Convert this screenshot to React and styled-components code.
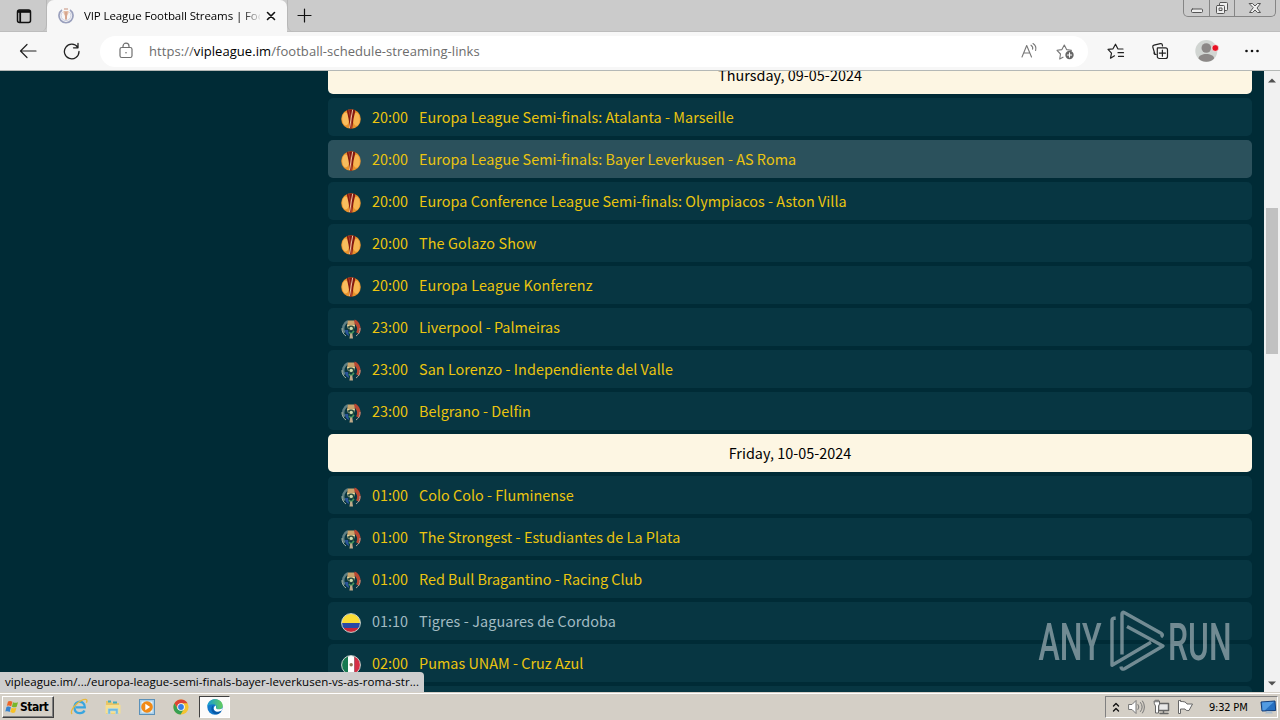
import React from 'react';
import styled, { createGlobalStyle } from 'styled-components';

const Global = createGlobalStyle`
  * { box-sizing: border-box; }
  body { margin: 0; overflow: hidden; background: #002b36; }
  svg { display: block; flex: none; }
`;

const uiFont = '"Open Sans", "Noto Sans", sans-serif';
const pageFont = '"Noto Sans CJK SC", "Open Sans", sans-serif';

const Screen = styled.div`
  width: 1280px;
  height: 720px;
  display: flex;
  flex-direction: column;
  position: relative;
  overflow: hidden;
  font-family: ${uiFont};
`;

/* ---------- window title and tabs ---------- */
const TitleBar = styled.header`
  flex: none;
  height: 32px;
  display: flex;
  background: #cbcbcb;
  border-bottom: 1px solid #bdbdbd;
`;
const TabMenu = styled.div`
  width: 47px;
  height: 32px;
  padding: 8px 0 0 16px;
  border-right: 1px solid #b7b7b7;
  border-radius: 0 0 7px 0;
`;
const Tab = styled.div`
  width: 240px;
  height: 32px;
  display: flex;
  align-items: center;
  padding: 0 9px 0 11px;
  background: #f7f7f7;
  border-radius: 7px 7px 0 0;
`;
const TabTitle = styled.span`
  width: 176px;
  margin-left: 10px;
  white-space: nowrap;
  overflow: hidden;
  font-size: 11.5px;
  line-height: 20px;
  letter-spacing: -0.1px;
  color: #000;
  -webkit-mask-image: linear-gradient(90deg, #000 158px, transparent 178px);
  mask-image: linear-gradient(90deg, #000 158px, transparent 178px);
`;
const TabClose = styled.div`
  margin-left: 6px;
`;
const NewTab = styled.div`
  width: 36px;
  height: 32px;
  padding: 8px 0 0 9px;
  border-left: 1px solid #b7b7b7;
  border-radius: 0 0 0 7px;
`;
const WindowButtons = styled.div`
  display: flex;
  height: 17px;
  margin-left: auto;
  margin-right: 4px;
  border: 1px solid #858585;
  border-top: 0;
  border-radius: 0 0 5px 5px;
`;
const WindowButton = styled.div`
  width: ${(p) => p.$w}px;
  display: flex;
  align-items: center;
  justify-content: center;
  border-left: ${(p) => (p.$first ? 0 : 1)}px solid #858585;
`;

/* ---------- address bar ---------- */
const Toolbar = styled.nav`
  flex: none;
  height: 39px;
  display: flex;
  align-items: center;
  padding: 0 18px;
  background: #f7f7f7;
  border-bottom: 1px solid #b4b8b6;
`;
const Gap = styled.div`
  width: ${(p) => p.$w}px;
  flex: none;
`;
const Address = styled.div`
  width: 988px;
  height: 31px;
  margin-left: 18px;
  display: flex;
  align-items: center;
  padding: 0 12px 0 17px;
  background: #fff;
  border-radius: 16px;
`;
const Url = styled.div`
  flex: 1;
  margin-left: 14px;
  font-size: 13px;
  letter-spacing: 0.06px;
  line-height: 20px;
  white-space: nowrap;
  color: #6c6c6c;
  b { font-weight: 400; color: #000; }
`;

/* ---------- page ---------- */
const Viewport = styled.main`
  flex: none;
  height: 621px;
  display: flex;
  overflow: hidden;
  background: #002b36;
`;
const Schedule = styled.section`
  width: 924px;
  margin: -15px 12px 0 328px;
  flex: none;
  display: flex;
  flex-direction: column;
  gap: 4px;
  font-family: ${pageFont};
  font-size: 14.4px;
`;
const DayHeader = styled.div`
  flex: none;
  height: 38px;
  border-radius: 5px;
  background: #fdf6e3;
  color: #000;
  text-align: center;
  line-height: 37px;
  letter-spacing: 0.02px;
`;
const Match = styled.div`
  flex: none;
  height: 38px;
  display: flex;
  align-items: center;
  padding: 0 13px;
  border-radius: 5px;
  background: ${(p) => (p.$hover ? '#2b515c' : '#073642')};
  color: ${(p) => (p.$muted ? '#a3bcc3' : '#ecc50f')};
  white-space: nowrap;
  svg { margin-top: 3px; }
`;
const Time = styled.span`
  width: 47px;
  margin: -2px 0 0 11px;
`;
const Name = styled.span`
  margin-top: -2px;
  letter-spacing: ${(p) => p.$spacing || 0}px;
`;
const ScrollTrack = styled.div`
  width: 16px;
  flex: none;
  display: flex;
  flex-direction: column;
  align-items: center;
  justify-content: space-between;
  padding: 7px 0 6px;
  background: #f1f1f1;
`;
const ScrollThumb = styled.div`
  width: 12px;
  height: 146px;
  margin-bottom: 203px;
  background: #c1c1c1;
`;
const StatusBubble = styled.div`
  position: absolute;
  left: 0;
  top: 672px;
  width: 424px;
  height: 20px;
  padding-left: 5px;
  border-radius: 0 4px 0 0;
  background: #cecece;
  color: #000;
  font-size: 11.5px;
  line-height: 19px;
  letter-spacing: 0.045px;
  white-space: nowrap;
`;
const Watermark = styled.svg`
  position: absolute;
  left: 1036px;
  top: 606px;
`;

/* ---------- taskbar ---------- */
const Taskbar = styled.footer`
  flex: none;
  height: 28px;
  display: flex;
  align-items: center;
  padding: 1px 2px 0 2px;
  background: #d4cfc6;
  border-top: 1px solid #d4cfc6;
  box-shadow: inset 0 1px 0 #fff;
`;
const StartButton = styled.div`
  width: 52px;
  height: 22px;
  display: flex;
  align-items: center;
  padding-left: 2px;
  gap: 1px;
  border: 1px solid;
  border-color: #fff #404040 #404040 #fff;
  box-shadow: inset -1px -1px 0 #808080;
  font: 700 12px "DejaVu Sans Condensed", "DejaVu Sans", sans-serif;
  letter-spacing: -0.5px;
  color: #000;
`;
const TaskIcon = styled.div`
  width: ${(p) => (p.$active ? 31 : 34)}px;
  height: 22px;
  display: flex;
  align-items: center;
  justify-content: center;
  ${(p) => p.$active && 'border: 1px solid; border-color: #404040 #fff #fff #404040; background: #fcfbfa; margin-left: 1px;'}
`;
const Tray = styled.div`
  height: 22px;
  width: 173px;
  margin-left: auto;
  display: flex;
  align-items: center;
  padding-left: 6px;
  border: 1px solid;
  border-color: #808080 #fff #fff #808080;
`;
const Clock = styled.span`
  width: 51px;
  margin-left: 15px;
  font: 11px "DejaVu Sans Condensed", "DejaVu Sans", sans-serif;
  letter-spacing: -0.2px;
  color: #000;
  white-space: nowrap;
`;

const Line = ({ w = 18, h = 18, box, color = '#222', sw = 1.2, children }) => (
  <svg width={w} height={h} viewBox={box || `0 0 ${w} ${h}`} fill="none" stroke={color} strokeWidth={sw} strokeLinecap="round" strokeLinejoin="round">
    {children}
  </svg>
);

const Europa = () => (
  <svg width="20" height="20" viewBox="0 0 20 20">
    <clipPath id="eu"><circle cx="10" cy="10" r="9.8" /></clipPath>
    <g clipPath="url(#eu)">
      <path fill="#e8912b" d="M0 0h20v20H0z" />
      <ellipse cx="4.7" cy="10" rx="3.5" ry="6.5" fill="#f8bd5e" />
      <ellipse cx="15.4" cy="10.300" rx="3.4" ry="6.5" fill="#f7b552" />
      <path d="M5.500 0h9.200l-2.200 10-1.400 10H9L7.600 10z" fill="#84180f" />
      <path d="m7.500 0 2.700 11 .3 8" fill="none" stroke="#c4563a" strokeWidth=".7" />
      <path d="M11.700.5 10.200 9l-1.600 10" fill="none" stroke="#edc6a6" strokeWidth="1" />
    </g>
  </svg>
);
const Copa = () => (
  <svg width="20" height="20" viewBox="0 0 20 20" fill="none">
    <path d="M3.2 13.8A8.2 8.2 0 0 1 7 2.2" stroke="#5f7f83" strokeWidth="2.5" />
    <path d="M1 9a9 9 0 0 0 4 8" stroke="#9fae9f" />
    <path d="M13 2.2a8.4 8.4 0 0 1 3.6 12" stroke="#b94732" strokeWidth="3.5" />
    <path d="M19 9a9 9 0 0 1-4 8" stroke="#a9a098" />
    <path d="M4 11c0 3 1.500 5 4 6l-1-6z" fill="#2b559a" />
    <path d="M7 1.500h6l1 5H6z" fill="#c9a46d" />
    <path d="M6 6h8l-1 4H7z" fill="#e5d59b" />
    <path d="M7 8c0-2 6-2 6 0v4H8z" fill="#24473d" />
    <circle cx="10.2" cy="9.4" r="1.7" fill="#cfdbb0" />
    <path d="m8 13 2 2 3-3" stroke="#48955b" strokeWidth="1.7" />
    <path d="M9.3 14.500h2l.7 5H8.400z" fill="#bea989" />
  </svg>
);
const Colombia = () => (
  <svg width="20" height="20" viewBox="0 0 20 20">
    <clipPath id="co"><circle cx="10" cy="10" r="9.3" /></clipPath>
    <g clipPath="url(#co)"><path fill="#fbdc35" d="M0 0h20v10H0z" /><path fill="#2949a5" d="M0 10h20v5H0z" /><path fill="#ca2637" d="M0 15h20v5H0z" /></g>
    <circle cx="10" cy="10" r="9.4" fill="none" stroke="#dfe3dc" strokeWidth=".9" />
  </svg>
);
const Mexico = () => (
  <svg width="20" height="20" viewBox="0 0 20 20">
    <clipPath id="mx"><circle cx="10" cy="10" r="9.3" /></clipPath>
    <g clipPath="url(#mx)"><path fill="#167951" d="M0 0h7v20H0z" /><path fill="#fff" d="M7 0h6.5v20H7z" /><path fill="#d62f45" d="M13.5 0H20v20h-6.5z" /></g>
    <circle cx="10.2" cy="9.7" r="1.7" fill="#8f7754" />
    <circle cx="10" cy="10" r="9.4" fill="none" stroke="#dfe3dc" strokeWidth=".9" />
  </svg>
);
const badges = { europa: Europa, copa: Copa, co: Colombia, mx: Mexico };

const thursday = [
  ['europa', '20:00', 'Europa League Semi-finals: Atalanta - Marseille', 0.045],
  ['europa', '20:00', 'Europa League Semi-finals: Bayer Leverkusen - AS Roma', 0.045],
  ['europa', '20:00', 'Europa Conference League Semi-finals: Olympiacos - Aston Villa', 0.04],
  ['europa', '20:00', 'The Golazo Show', 0.13],
  ['europa', '20:00', 'Europa League Konferenz', 0.11],
  ['copa', '23:00', 'Liverpool - Palmeiras', 0.02],
  ['copa', '23:00', 'San Lorenzo - Independiente del Valle', 0.055],
  ['copa', '23:00', 'Belgrano - Delfin', 0.04],
];
const friday = [
  ['copa', '01:00', 'Colo Colo - Fluminense', 0.02],
  ['copa', '01:00', 'The Strongest - Estudiantes de La Plata', 0.04],
  ['copa', '01:00', 'Red Bull Bragantino - Racing Club', -0.03],
  ['co', '01:10', 'Tigres - Jaguares de Cordoba', 0.1],
  ['mx', '02:00', 'Pumas UNAM - Cruz Azul', 0.03],
];

const MatchRow = ({ data: [badge, time, name, spacing], hover, muted }) => {
  const Badge = badges[badge];
  return (
    <Match $hover={hover} $muted={muted}>
      <Badge />
      <Time>{time}</Time>
      <Name $spacing={spacing}>{name}</Name>
    </Match>
  );
};

export default function App() {
  return (
    <>
      <Global />
      <Screen>
        <TitleBar>
          <TabMenu>
            <Line w={16} h={16} color="#111" sw={1.5}>
              <rect x="1.5" y="2" width="13" height="12.5" rx="2" /><path d="M2 3.500h12" strokeWidth="2.600" strokeLinecap="butt" /><path d="M4.200 4v10" strokeWidth="1.800" strokeLinecap="butt" />
            </Line>
          </TabMenu>
          <Tab>
            <svg width="16" height="16" viewBox="0 0 16 16" fill="none">
              <path d="M4 2a7 7 0 1 0 8 0" stroke="#9aa0bd" strokeWidth="1.7" />
              <path d="M4.5 4a5 5 0 1 0 7 0" stroke="#c9ccdf" />
              <path d="M5.5 3h5v2L9 8v3H7V8L5.500 5z" fill="#e5bda5" /><path d="M6 1h4M8 4v8" stroke="#c7907b" />
            </svg>
            <TabTitle>VIP League Football Streams | Football</TabTitle>
            <TabClose><Line w={10} h={10} sw={1.6} color="#111"><path d="m1.5 1.5 7 7m0-7-7 7" /></Line></TabClose>
          </Tab>
          <NewTab><Line w={15} h={15} color="#111"><path d="M7.5 1v13M1 7.500h13" /></Line></NewTab>
          <WindowButtons>
            <WindowButton $w={25} $first><Line w={14} h={14} color="#555" sw={1}><rect x="1.5" y="8" width="11" height="3.5" rx="1" fill="#eee" /></Line></WindowButton>
            <WindowButton $w={25}><Line w={14} h={14} color="#555" sw={1}><rect x="4.5" y="1.5" width="8" height="8" rx="1" fill="#eee" /><rect x="1.5" y="4.5" width="8" height="8" rx="1" fill="#eee" /><rect x="4.5" y="7" width="2.5" height="2.5" /></Line></WindowButton>
            <WindowButton $w={41}><Line w={14} h={14} color="#555" sw={1}><path d="M1.500 2.500h3L7 5l2.500-2.500h3L9 7l3.500 4.500h-3L7 9l-2.500 2.500h-3L5 7z" fill="#eee" /></Line></WindowButton>
          </WindowButtons>
        </TitleBar>

        <Toolbar>
          <Line w={20} h={18}><path d="M18 9H2.500M9 2.500 2.500 9 9 15.500" /></Line>
          <Gap $w={24} />
          <Line w={19} h={18} sw={1.3}><path d="M15.800 5.500A7.300 7.300 0 1 0 17 9.500M16 1.500v4.300h-4.500" /></Line>
          <Gap $w={1} />
          <Address>
            <Line w={18} h={18} color="#707070"><rect x="3" y="5.500" width="12" height="10" rx="1.8" /><path d="M6 5.500V4.200a3 3 0 0 1 6 0v1.300" /><circle cx="9" cy="10.800" r=".8" fill="#707070" stroke="none" /></Line>
            <Url>https://<b>vipleague.im</b>/football-schedule-streaming-links</Url>
            <Line w={18} h={18} color="#777" sw={1.1}><path d="m2 15 4.700-11.500L11.500 15M3.700 11h6.200M11 3.200c1.500 1 2 2.500 1.600 4M13 1.500c2.600 1.700 3.300 4.500 2.600 7" /></Line>
            <Gap $w={18} />
            <Line w={20} h={18} color="#777" sw={1.1}><path d="M7 15.200 3.700 17l.8-5L1 8.300l4.900-.7L8.300 3l2.300 4.600 4.800.7-1 1" /><circle cx="13.5" cy="13" r="4.2" fill="#666" stroke="none" /><path d="M13.500 10.900v4.200M11.400 13h4.200" stroke="#fff" /></Line>
          </Address>
          <Gap $w={18} />
          <Line w={20} h={18}><path d="M8.500 13.800 4.500 16.200l1-5.100-3.500-3.700 5-.6L9.500 2.200l2.300 4.600M12 7h5M12 10.700h5.500M12.500 14.400h5" /></Line>
          <Gap $w={25} />
          <Line w={20} h={18}><path d="M5 12.500H4L1.800 5.200c-.3-1 .2-1.800 1.200-2.100l6.300-1.500c1-.2 1.800.2 2 1.200l.2 1.200M5 12.500c-1.700 0-2-1-2-2M6.800 5.800h7.700a2 2 0 0 1 2 2v6.700a2 2 0 0 1-2 2H8.300a2 2 0 0 1-2-2V6.500c0-.5.200-.7.500-.7M11.400 8v6.200M8.300 11.100h6.200" /></Line>
          <Gap $w={24} />
          <svg width="24" height="24" viewBox="0 0 24 24"><circle cx="11.300" cy="12" r="11" fill="#d1d5d2" /><circle cx="11.300" cy="9" r="4.800" fill="#8c8887" /><path d="M3.500 19.500c0-6 15.600-6 15.600 0a10.800 10.800 0 0 1-15.600 0" fill="#8c8887" /><circle cx="20.300" cy="9" r="3.300" fill="#e81123" stroke="#f7f7f7" strokeWidth=".6" /></svg>
          <Gap $w={25} />
          <svg width="16" height="6" viewBox="0 0 16 6" fill="#111"><circle cx="2.5" cy="3" r="1.300" /><circle cx="8" cy="3" r="1.300" /><circle cx="13.500" cy="3" r="1.300" /></svg>
        </Toolbar>

        <Viewport>
          <Schedule>
            <DayHeader>Thursday, 09-05-2024</DayHeader>
            {thursday.map((m, i) => <MatchRow key={m[2]} data={m} hover={i === 1} />)}
            <DayHeader>Friday, 10-05-2024</DayHeader>
            {friday.map((m, i) => <MatchRow key={m[2]} data={m} muted={i === 3} />)}
            <Match />
          </Schedule>
          <ScrollTrack>
            <svg width="8" height="5" viewBox="0 0 8 5"><path d="m0 4.500 4-4 4 4z" fill="#505050" /></svg>
            <ScrollThumb />
            <svg width="8" height="5" viewBox="0 0 8 5"><path d="m0 .5 4 4 4-4z" fill="#505050" /></svg>
          </ScrollTrack>
        </Viewport>

        <Taskbar>
          <StartButton>
            <svg width="14" height="14" viewBox="0 0 14 14"><path d="M3 1.500c2-1 3-.5 4.400.3L6.200 6.400C4.700 5.500 3.500 5.400 1.800 6z" fill="#ed6526" /><path d="M8 2.200c1.700.9 3.200.8 5 0l-1.300 4.600c-1.600.8-3.200.7-4.800-.1z" fill="#78b72b" /><path d="M1.500 7c1.700-.7 3-.5 4.400.3l-1.200 4.600C3.300 11.100 2 11 .3 11.600z" fill="#3583cf" /><path d="M6.600 7.700c1.500.8 3 .9 4.800.1l-1.300 4.500c-1.700.9-3.300.7-4.800-.2z" fill="#f8c126" /></svg>
            Start
          </StartButton>
          <Gap $w={8} />
          <TaskIcon><svg width="18" height="18" viewBox="0 0 18 18" fill="none"><path d="M14.500 12.500c-1 2-3 2.800-5.100 2.600C3 15 3.300 5.400 8 4c4-1 7 1.500 6.800 5.300H6" stroke="#38a5df" strokeWidth="2.300" /><path d="M2 16C-1 12 10 1 15.700 1.300c1.800.2 1.300 2.200.7 3.400" stroke="#e7b83c" strokeWidth="1.300" /></svg></TaskIcon>
          <TaskIcon><svg width="18" height="18" viewBox="0 0 18 18"><path d="M2 3h5l1 2h7v11H2z" fill="#e8c565" /><path d="M4 3.500h3M9 4.500h4" stroke="#45aabb" strokeWidth="2" /><path d="M1.500 7h15v8.500h-15z" fill="#f5df91" /><path d="M4 16v-5.500h10V16h-2.300v-3H6.300v3z" fill="#70b9df" stroke="#b8dce8" strokeWidth=".6" /></svg></TaskIcon>
          <TaskIcon><svg width="18" height="18" viewBox="0 0 18 18"><rect x="1.500" y="1.500" width="15" height="15" fill="#a9cee8" stroke="#5b91b9" /><rect x="3.500" y="3.500" width="11" height="11" fill="#e8f4fa" /><circle cx="9" cy="9" r="5.800" fill="#f18a17" /><path d="m7.300 5.700 4.800 3.300-4.800 3.300z" fill="#fff" /></svg></TaskIcon>
          <TaskIcon><svg width="16" height="16" viewBox="0 0 16 16"><circle cx="8" cy="8" r="7.600" fill="#f4c431" /><path d="M1.400 4.200A7.600 7.600 0 0 1 14.600 4.300H8L4.800 9.800z" fill="#dc4435" /><path d="M1.400 4.200a7.600 7.600 0 0 0 6.200 11.400l3.300-5.700H4.800z" fill="#37a052" /><circle cx="8" cy="8" r="3.800" fill="#fff" /><circle cx="8" cy="8" r="2.900" fill="#377fe4" /></svg></TaskIcon>
          <TaskIcon $active>
            <svg width="16" height="16" viewBox="0 0 16 16"><defs><linearGradient id="edge"><stop stopColor="#159bd7" /><stop offset="1" stopColor="#65ce5a" /></linearGradient></defs><circle cx="8" cy="8" r="7.700" fill="#1279cc" /><path d="M.3 8C.5-2.500 15.700-1.800 15.700 7c0 3.800-6.500 4.300-6.700 2 1.300-1.700-.2-3.700-2.500-3.700C3 5.300 1 6.300.3 8" fill="url(#edge)" /><path d="M9 6.600c-3.500 1-3 6.300 1.500 6.500 1.700.1 3.100-.7 4-1.300l1.200-2.700c-2 1.700-6.700 1.600-6.700-.1z" fill="#fff" /><path d="M6.500 6c-4.500 3-1.400 9.500 3.500 9.300 2.300-.6 3.500-1.800 4.500-3.500-6.300 3-9.800-1.300-8-5.800" fill="#075aa8" /></svg>
          </TaskIcon>
          <Tray>
            <Line w={8} h={12} color="#111" sw={1.4}><path d="m1.500 5 2.500-2.500L6.500 5m-5 5L4 7.500 6.500 10" /></Line>
            <Gap $w={8} />
            <Line w={17} h={16} color="#777" sw={1}><path d="M1 5.500h3l4-4v13l-4-4H1z" fill="#fff" /><path d="M10 5.500q2 2.500 0 5M12.500 3.500q3.500 4.500 0 9M14.500 2q4 6 0 12" /></Line>
            <Gap $w={8} />
            <Line w={17} h={16} color="#666" sw={1}><path d="M5.500 4.500h10v7h-10zM7 14.500h8M10.500 12v2" fill="#e9e9e9" strokeWidth="1.500" /><path d="M1.500 2h5v3l-1 2v7h-3V7l-1-2zM3 1v2M5 1v2" fill="#fff" /></Line>
            <Gap $w={7} />
            <Line w={17} h={16} color="#666" sw={1}><path d="M2.500 1.500h-1v13h2V10h4.500c1 2 2.500 1.500 4 1.500L15.500 5H10c-1-2.200-3-2.500-6.500-2.500v-1z" fill="#fff" /></Line>
            <Clock>9:32 PM</Clock>
            <svg width="17" height="16" viewBox="0 0 17 16"><path d="m1 3 14-1 .7 9.500L2 12z" fill="#266fc0" stroke="#143d78" /><path d="m2 3.500 12-.8-9 8.500H2.500z" fill="#539be1" /><path d="M7 12h4l2 2.500H5z" fill="#a9bdce" /></svg>
          </Tray>
        </Taskbar>

        <StatusBubble>vipleague.im/.../europa-league-semi-finals-bayer-leverkusen-vs-as-roma-str...</StatusBubble>
        <Watermark width="200" height="70" viewBox="0 0 200 70" fill="none" opacity=".62">
          <g fill="#b4c0c5" fontFamily="Roboto, sans-serif" fontSize="51.5" fontWeight="500">
            <text x="2.500" y="53.500" textLength="63" lengthAdjust="spacingAndGlyphs">ANY</text>
            <text x="132" y="53.500" textLength="63.500" lengthAdjust="spacingAndGlyphs">RUN</text>
          </g>
          <path d="M79.700 12.200H78q-2 .3-2 2.500v44.500l39-23M86 48.500V8q0-2.500 2.500-1.300l37 20.800q2 1.500-.5 3.500M91 20.500l36 19.500-38.500 22.700q-3.200 1.500-3.500-2.200" stroke="#b4c0c5" strokeWidth="3.400" strokeLinejoin="round" />
        </Watermark>
      </Screen>
    </>
  );
}
